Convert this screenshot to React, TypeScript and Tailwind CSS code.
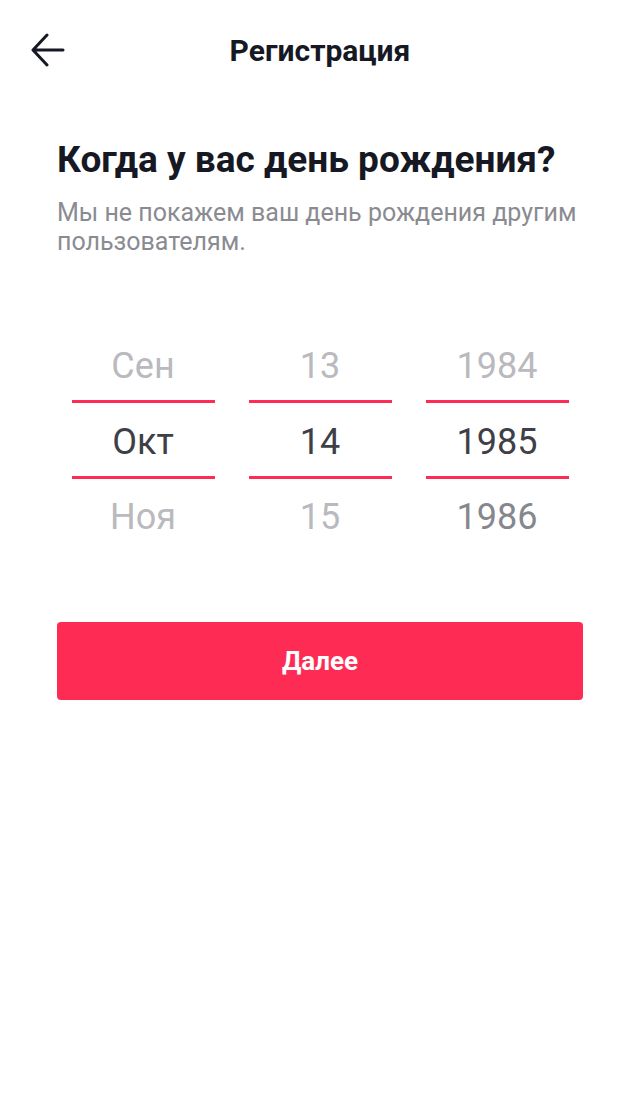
const columns = [
  { items: ["Сен", "Окт", "Ноя"], last: "text-[#b9b9be]" },
  { items: ["13", "14", "15"], last: "text-[#b9b9be]" },
  { items: ["1984", "1985", "1986"], last: "text-[#86878d]" },
];

const BackArrow = () => (
  <svg width="34" height="34" viewBox="0 0 34 34" fill="none">
    <path
      d="M32 17H3M16 2L2 17l14 15"
      stroke="#161823"
      strokeWidth="3"
      strokeLinecap="round"
      strokeLinejoin="round"
    />
  </svg>
);

export default function App() {
  return (
    <div className="w-[640px] h-[1100px] bg-white font-['Roboto',sans-serif] text-[#161823]">
      <header className="relative h-[100px] flex items-center justify-center">
        <button className="absolute left-[31px] top-[33px]">
          <BackArrow />
        </button>
        <h1 className="text-[30px] font-bold">Регистрация</h1>
      </header>

      <section className="px-[57px] pt-[37px]">
        <h2 className="text-[37px] font-bold leading-[46px]">Когда у вас день рождения?</h2>
        <p className="mt-[15px] text-[25px] leading-[29px] text-[#8a8b91]">
          Мы не покажем ваш день рождения другим пользователям.
        </p>
      </section>

      <div className="mt-[69px] flex justify-center gap-[34px]">
        {columns.map((col) => (
          <div key={col.items[1]} className="w-[143px] flex flex-col text-[36px]">
            <div className="h-[75px] pt-[6px] flex items-center justify-center text-[#b9b9be]">
              {col.items[0]}
            </div>
            <div className="h-[79px] pt-[4px] flex items-center justify-center border-y-[3px] border-[#fe2c55] text-[#3f4047]">
              {col.items[1]}
            </div>
            <div className={`h-[75px] flex items-center justify-center ${col.last}`}>
              {col.items[2]}
            </div>
          </div>
        ))}
      </div>

      <div className="px-[57px] mt-[68px]">
        <button className="w-full h-[78px] rounded-[4px] bg-[#fe2c55] text-white text-[26px] font-bold">
          Далее
        </button>
      </div>
    </div>
  );
}
